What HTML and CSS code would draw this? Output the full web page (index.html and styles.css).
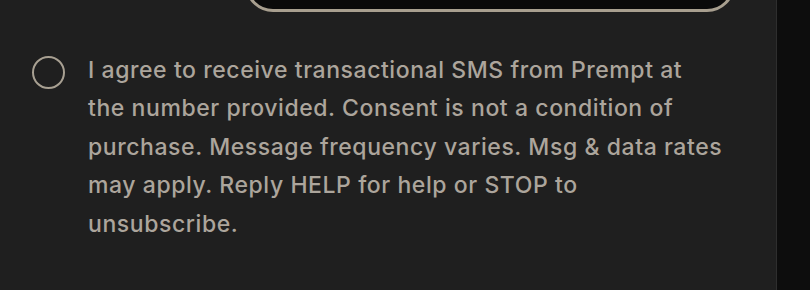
FILE: index.html
```html
<!DOCTYPE html>
<html lang="en">
<head>
    <meta charset="UTF-8">
    <meta name="viewport" content="width=device-width, initial-scale=1.0">
    <title>SMS consent</title>
    <link rel="stylesheet" href="styles.css">
</head>
<body>
    <div class="page">
        <div class="panel">
            <div class="field-row">
                <div class="field-box"></div>
            </div>
            <label class="consent">
                <span class="radio"></span>
                <span class="consent-text">I agree to receive transactional SMS from Prempt at the number provided. Consent is not a condition of purchase. Message frequency varies. Msg &amp; data rates may apply. Reply HELP for help or STOP to unsubscribe.</span>
            </label>
        </div>
        <div class="side"></div>
    </div>
</body>
</html>
```

FILE: styles.css
```css
html, body {
    margin: 0;
    padding: 0;
    height: 100%;
}
body {
    background-color: #1f1f1f;
    font-family: Inter, "Noto Sans", sans-serif;
    overflow: hidden;
}
.page {
    display: flex;
    height: 290px;
}
.panel {
    width: 776px;
    border-right: 1px solid #2e2e2e;
    background-color: #1f1f1f;
}
.side {
    flex: 1;
    background-color: #0d0d0d;
}
.field-row {
    display: flex;
    padding-left: 245px;
}
.field-box {
    width: 484px;
    height: 60px;
    margin-top: -54px;
    background-color: #0a0a0a;
    border: 3px solid #a89f8f;
    border-radius: 28px;
}
.consent {
    display: flex;
    align-items: flex-start;
    gap: 23px;
    margin-top: 39px;
    padding-left: 32px;
    width: 691px;
}
.radio {
    flex: none;
    width: 29px;
    height: 29px;
    margin-top: 5px;
    border: 2px solid #a8a092;
    border-radius: 50%;
}
.consent-text {
    color: #aca59c;
    font-size: 23px;
    line-height: 38.4px;
    letter-spacing: 0.57px;
    font-weight: 500;
}
```
